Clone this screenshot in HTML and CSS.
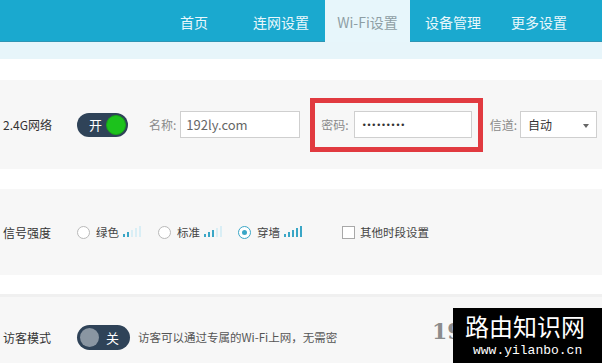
FILE: index.html
```html
<!DOCTYPE html>
<html lang="zh">
<head>
<meta charset="utf-8">
<title>Wi-Fi设置</title>
<link rel="stylesheet" href="styles.css">
</head>
<body>
<div class="page">
  <header class="topbar">
    <nav class="nav">
      <span class="nav-item">首页</span>
      <span class="nav-item nav-gap">连网设置</span>
      <span class="nav-item active">Wi-Fi设置</span>
      <span class="nav-item">设备管理</span>
      <span class="nav-item nav-last">更多设置</span>
    </nav>
  </header>
  <div class="strip"></div>
  <div class="spacer s1"></div>

  <section class="row r1">
    <div class="label">2.4G网络</div>
    <div class="toggle on"><span class="tg-text">开</span><span class="knob green"></span></div>
    <span class="field-label name-label">名称:</span>
    <div class="input name-input">192ly.com</div>
    <div class="highlight">
      <span class="field-label">密码:</span>
      <div class="input pwd-input"><span class="dots">•••••••••</span></div>
    </div>
    <span class="field-label ch-label">信道:</span>
    <div class="input select">自动<span class="caret"></span></div>
  </section>

  <div class="spacer s2"></div>

  <section class="row r2">
    <div class="label">信号强度</div>
    <span class="radio"></span><span class="opt">绿色</span>
    <svg class="bars" width="18" height="12" viewBox="0 0 18 12">
      <rect x="0" y="9" width="2" height="3" fill="#3aa6c6"/>
      <rect x="4" y="7" width="2" height="5" fill="#3aa6c6"/>
      <rect x="8" y="5" width="2" height="7" fill="#d9eef5"/>
      <rect x="12" y="3" width="2" height="9" fill="#d9eef5"/>
      <rect x="16" y="1" width="2" height="11" fill="#d9eef5"/>
    </svg>
    <span class="radio r-gap"></span><span class="opt">标准</span>
    <svg class="bars" width="18" height="12" viewBox="0 0 18 12">
      <rect x="0" y="9" width="2" height="3" fill="#3aa6c6"/>
      <rect x="4" y="7" width="2" height="5" fill="#3aa6c6"/>
      <rect x="8" y="5" width="2" height="7" fill="#3aa6c6"/>
      <rect x="12" y="3" width="2" height="9" fill="#d9eef5"/>
      <rect x="16" y="1" width="2" height="11" fill="#d9eef5"/>
    </svg>
    <span class="radio checked r-gap2"></span><span class="opt">穿墙</span>
    <svg class="bars" width="18" height="12" viewBox="0 0 18 12">
      <rect x="0" y="9" width="2" height="3" fill="#3aa6c6"/>
      <rect x="4" y="7" width="2" height="5" fill="#3aa6c6"/>
      <rect x="8" y="5" width="2" height="7" fill="#3aa6c6"/>
      <rect x="12" y="3" width="2" height="9" fill="#3aa6c6"/>
      <rect x="16" y="1" width="2" height="11" fill="#3aa6c6"/>
    </svg>
    <span class="checkbox"></span><span class="opt cb-text">其他时段设置</span>
  </section>

  <div class="spacer s3"></div>

  <section class="row r3">
    <div class="label">访客模式</div>
    <div class="toggle off"><span class="knob gray"></span><span class="tg-text">关</span></div>
    <span class="guest-text">访客可以通过专属的Wi-Fi上网，无需密</span>
  </section>

  <div class="wm-behind">19</div>
  <div class="watermark">
    <div class="wm-title">路由知识网</div>
    <div class="wm-url">www.yilanbo.cn</div>
  </div>
</div>
</body>
</html>
```

FILE: styles.css
```css
* { box-sizing: border-box; }
html, body { margin: 0; padding: 0; }
body {
  background: #fff;
  font-family: "Noto Sans CJK SC", "Microsoft YaHei", sans-serif;
  color: #333;
  overflow: hidden;
}
.page {
  position: relative;
  width: 602px;
  height: 363px;
  overflow: hidden;
}

.topbar {
  height: 42px;
  background: #1aa9cf;
  border-bottom: 1px solid #2e95b4;
}
.nav {
  display: flex;
  justify-content: flex-end;
  height: 41px;
  padding-right: 25px;
  gap: 6px;
}
.nav-item {
  padding: 2px 10px 0;
  line-height: 41px;
  font-size: 14px;
  color: #eaf8fc;
  white-space: nowrap;
}
.nav-gap { margin-left: 19px; }
.nav-item.active {
  background: #e7f6fb;
  color: #8e9ea4;
  height: 42px;
  margin-left: 0;
  margin-right: -1px;
  width: 85px;
  text-align: center;
  padding: 2px 0 0;
}
.nav-last { margin-left: 4px; }

.strip {
  height: 17px;
  background: #e7f5fa;
}
.spacer { background: #fff; }
.s1 { height: 21px; }
.s2 { height: 20px; }
.s3 { height: 22px; border-bottom: 3px solid #f0f0f0; }

.row {
  display: flex;
  align-items: center;
  background: #f7f7f7;
  padding-left: 3px;
  font-size: 12px;
}
.r1 { height: 89px; }
.r2 { height: 86px; }
.r3 { height: 80px; }

.label {
  width: 74px;
  color: #333;
  font-size: 12px;
  white-space: nowrap;
}

.toggle {
  display: flex;
  align-items: center;
  background: #2f4358;
  border-radius: 13px;
  color: #fff;
}
.toggle.on {
  width: 51px;
  height: 24px;
  padding: 0 2px 0 12px;
  justify-content: space-between;
}
.toggle.off {
  width: 53px;
  height: 25px;
  padding-left: 3px;
}
.tg-text { font-size: 13px; line-height: 1; }
.knob {
  display: block;
  border-radius: 50%;
}
.knob.green {
  width: 20px;
  height: 20px;
  background: #1cc21c;
  border: 1px solid #17a717;
}
.knob.gray {
  width: 19px;
  height: 19px;
  background: #8a96a2;
  margin-right: 7px;
}

.field-label {
  color: #8a8a8a;
  font-size: 12px;
  white-space: nowrap;
}
.name-label { margin-left: 21px; margin-right: 4px; }
.input {
  height: 27px;
  background: #fff;
  border: 1px solid #cfcfcf;
  font-size: 13px;
  color: #666;
  display: flex;
  align-items: center;
  padding-left: 5px;
}
.name-input { width: 120px; }

.highlight {
  display: flex;
  align-items: center;
  margin-left: 10px;
  height: 54px;
  border: 5px solid #e13a40;
  padding: 0 6px 0 6px;
  background: #f7f7f7;
}
.highlight .field-label { margin-right: 5px; }
.pwd-input { width: 118px; padding-left: 7px; }
.dots {
  font-family: "DejaVu Sans", sans-serif;
  font-size: 8.5px;
  color: #333;
  letter-spacing: -0.2px;
}

.ch-label { margin-left: 7px; margin-right: 3px; }
.select {
  width: 77px;
  color: #333;
  padding-left: 7px;
  position: relative;
  font-size: 12px;
}
.caret {
  position: absolute;
  right: 7px;
  top: 12px;
  width: 0;
  height: 0;
  border-left: 3.5px solid transparent;
  border-right: 3.5px solid transparent;
  border-top: 4px solid #666;
}

.radio {
  width: 13px;
  height: 13px;
  border-radius: 50%;
  border: 1px solid #b9b9b9;
  background: #fff;
  display: inline-flex;
  align-items: center;
  justify-content: center;
}
.radio.checked { border-color: #3aa6c6; }
.radio.checked::after {
  content: "";
  width: 5px;
  height: 5px;
  border-radius: 50%;
  background: #3aa6c6;
}
.r-gap { margin-left: 17px; }
.r-gap2 { margin-left: 16px; }
.opt {
  margin-left: 6px;
  color: #444;
  font-size: 11.5px;
  white-space: nowrap;
}
.bars { margin-left: 4px; margin-top: -2px; }
.checkbox {
  width: 13px;
  height: 13px;
  border: 1px solid #a8a8a8;
  background: #fff;
  margin-left: 40px;
}
.cb-text { margin-left: 5px; }

.guest-text {
  margin-left: 8px;
  color: #555;
  font-size: 11.5px;
  white-space: nowrap;
}

.wm-behind {
  position: absolute;
  left: 432px;
  top: 318px;
  font-family: "DejaVu Serif", serif;
  font-weight: bold;
  font-size: 22px;
  color: #8c8c8c;
  line-height: 1.2;
}
.watermark {
  position: absolute;
  left: 453px;
  top: 308px;
  width: 149px;
  height: 55px;
  background: #000;
  color: #fff;
  padding: 0 0 0 12px;
}
.wm-title {
  font-size: 24px;
  line-height: 35px;
  white-space: nowrap;
}
.wm-url {
  font-family: "Liberation Mono", monospace;
  font-size: 13px;
  line-height: 15px;
  padding-left: 8px;
  white-space: nowrap;
}
```
